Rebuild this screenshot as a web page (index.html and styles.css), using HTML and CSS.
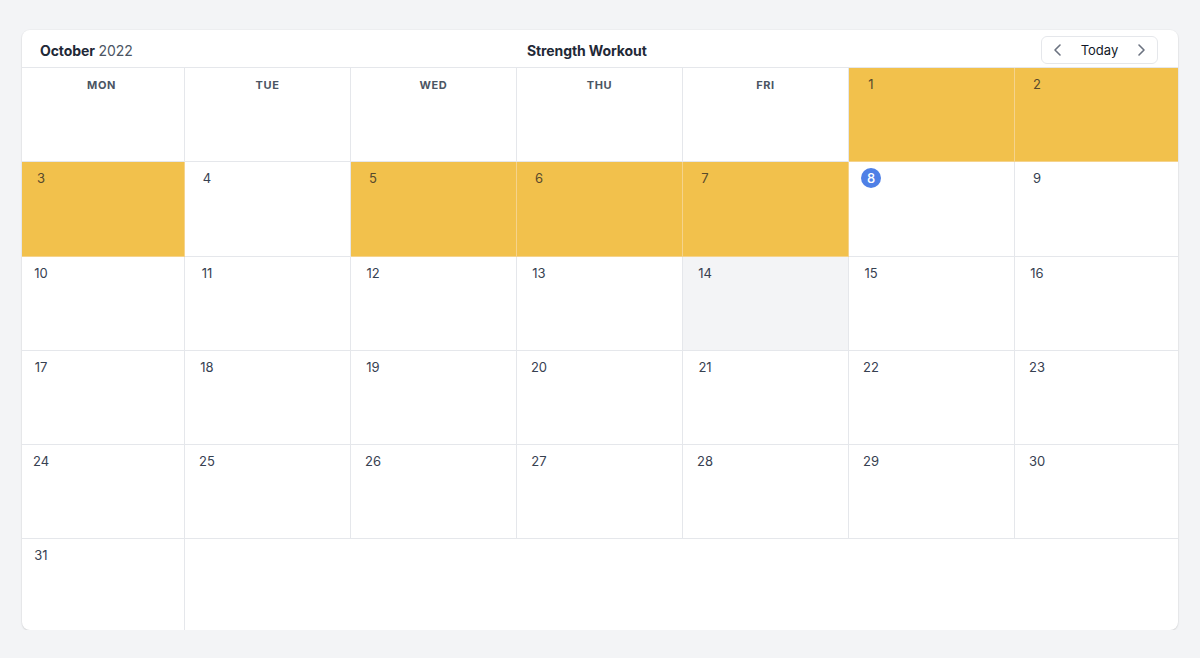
FILE: index.html
```html
<!DOCTYPE html>
<html>
<head>
<meta charset="utf-8">
<link rel="stylesheet" href="styles.css">
</head>
<body>
<div class="card">
  <div class="topbar">
    <div class="month"><b>October</b> 2022</div>
    <div class="title">Strength Workout</div>
    <div class="nav">
      <span class="chev"><svg width="16" height="16" viewBox="0 0 16 16"><path d="M10 3 L5 8 L10 13" fill="none" stroke="#6b7280" stroke-width="1.6" stroke-linecap="round" stroke-linejoin="round"/></svg></span>
      <span class="today">Today</span>
      <span class="chev"><svg width="16" height="16" viewBox="0 0 16 16"><path d="M6 3 L11 8 L6 13" fill="none" stroke="#6b7280" stroke-width="1.6" stroke-linecap="round" stroke-linejoin="round"/></svg></span>
    </div>
  </div>
  <div class="grid">
    <div class="cell"><div class="dow">MON</div></div>
    <div class="cell"><div class="dow">TUE</div></div>
    <div class="cell"><div class="dow">WED</div></div>
    <div class="cell"><div class="dow">THU</div></div>
    <div class="cell"><div class="dow">FRI</div></div>
    <div class="cell hl"><span class="num">1</span></div>
    <div class="cell hl last"><span class="num">2</span></div>

    <div class="cell hl"><span class="num">3</span></div>
    <div class="cell"><span class="num">4</span></div>
    <div class="cell hl"><span class="num">5</span></div>
    <div class="cell hl"><span class="num">6</span></div>
    <div class="cell hl"><span class="num">7</span></div>
    <div class="cell"><span class="num cur">8</span></div>
    <div class="cell last"><span class="num">9</span></div>

    <div class="cell"><span class="num">10</span></div>
    <div class="cell"><span class="num">11</span></div>
    <div class="cell"><span class="num">12</span></div>
    <div class="cell"><span class="num">13</span></div>
    <div class="cell sel"><span class="num">14</span></div>
    <div class="cell"><span class="num">15</span></div>
    <div class="cell last"><span class="num">16</span></div>

    <div class="cell"><span class="num">17</span></div>
    <div class="cell"><span class="num">18</span></div>
    <div class="cell"><span class="num">19</span></div>
    <div class="cell"><span class="num">20</span></div>
    <div class="cell"><span class="num">21</span></div>
    <div class="cell"><span class="num">22</span></div>
    <div class="cell last"><span class="num">23</span></div>

    <div class="cell"><span class="num">24</span></div>
    <div class="cell"><span class="num">25</span></div>
    <div class="cell"><span class="num">26</span></div>
    <div class="cell"><span class="num">27</span></div>
    <div class="cell"><span class="num">28</span></div>
    <div class="cell"><span class="num">29</span></div>
    <div class="cell last"><span class="num">30</span></div>

    <div class="cell bottom"><span class="num">31</span></div>
    <div class="cell bottom empty"></div>
  </div>
</div>
</body>
</html>
```

FILE: styles.css
```css
* { box-sizing: border-box; }
html, body { margin: 0; padding: 0; }
body {
  background: #f3f4f6;
  font-family: Inter, "Helvetica Neue", Arial, sans-serif;
  color: #374151;
  padding: 30px 22px 0 22px;
}
.card {
  background: #fff;
  border-radius: 8px;
  box-shadow: 0 1px 2px rgba(0,0,0,0.12), 0 0 0 1px rgba(0,0,0,0.02);
  height: 600px;
  display: flex;
  flex-direction: column;
  overflow: hidden;
}
.topbar {
  height: 38px;
  flex: none;
  display: flex;
  align-items: center;
  justify-content: space-between;
  padding: 3px 20px 0 18px;
  border-bottom: 1px solid #e5e7eb;
}
.month {
  font-size: 14px;
  color: #4b5563;
  letter-spacing: -0.1px;
}
.month b { color: #1f2937; font-weight: 700; }
.title {
  font-size: 14px;
  font-weight: 700;
  color: #1f2937;
  letter-spacing: -0.1px;
}
.nav {
  width: 117px;
  height: 28px;
  border: 1px solid #e5e7eb;
  border-radius: 6px;
  display: flex;
  align-items: center;
  justify-content: space-between;
  padding: 0 8px;
}
.chev { display: flex; align-items: center; }
.today { font-size: 13px; color: #111827; }
.grid {
  flex: 1;
  display: grid;
  grid-template-columns: 163px repeat(5, 166px) 1fr;
  grid-template-rows: 94px 95px 94px 94px 94px 1fr;
}
.cell {
  border-right: 1px solid #e5e7eb;
  border-bottom: 1px solid #e5e7eb;
  padding: 6px 12px;
  font-size: 13px;
}
.cell:nth-child(7n+1) { padding-left: 9px; }
.cell.last { border-right: none; }
.cell.bottom { border-bottom: none; }
.cell.empty { grid-column: span 6; border-right: none; }
.dow {
  text-align: center;
  font-size: 11px;
  font-weight: 700;
  letter-spacing: 0.6px;
  color: #4b5563;
  line-height: 20px;
  margin-top: 1px;
}
.num {
  display: inline-block;
  width: 20px;
  height: 20px;
  line-height: 20px;
  text-align: center;
  border-radius: 50%;
}
.hl {
  background: #f2c14c;
  border-color: #f5d38c;
  color: #584a2c;
}
.sel { background: #f3f4f6; }
.num.cur {
  background: #4f80e6;
  color: #fff;
  font-weight: 500;
}
```
